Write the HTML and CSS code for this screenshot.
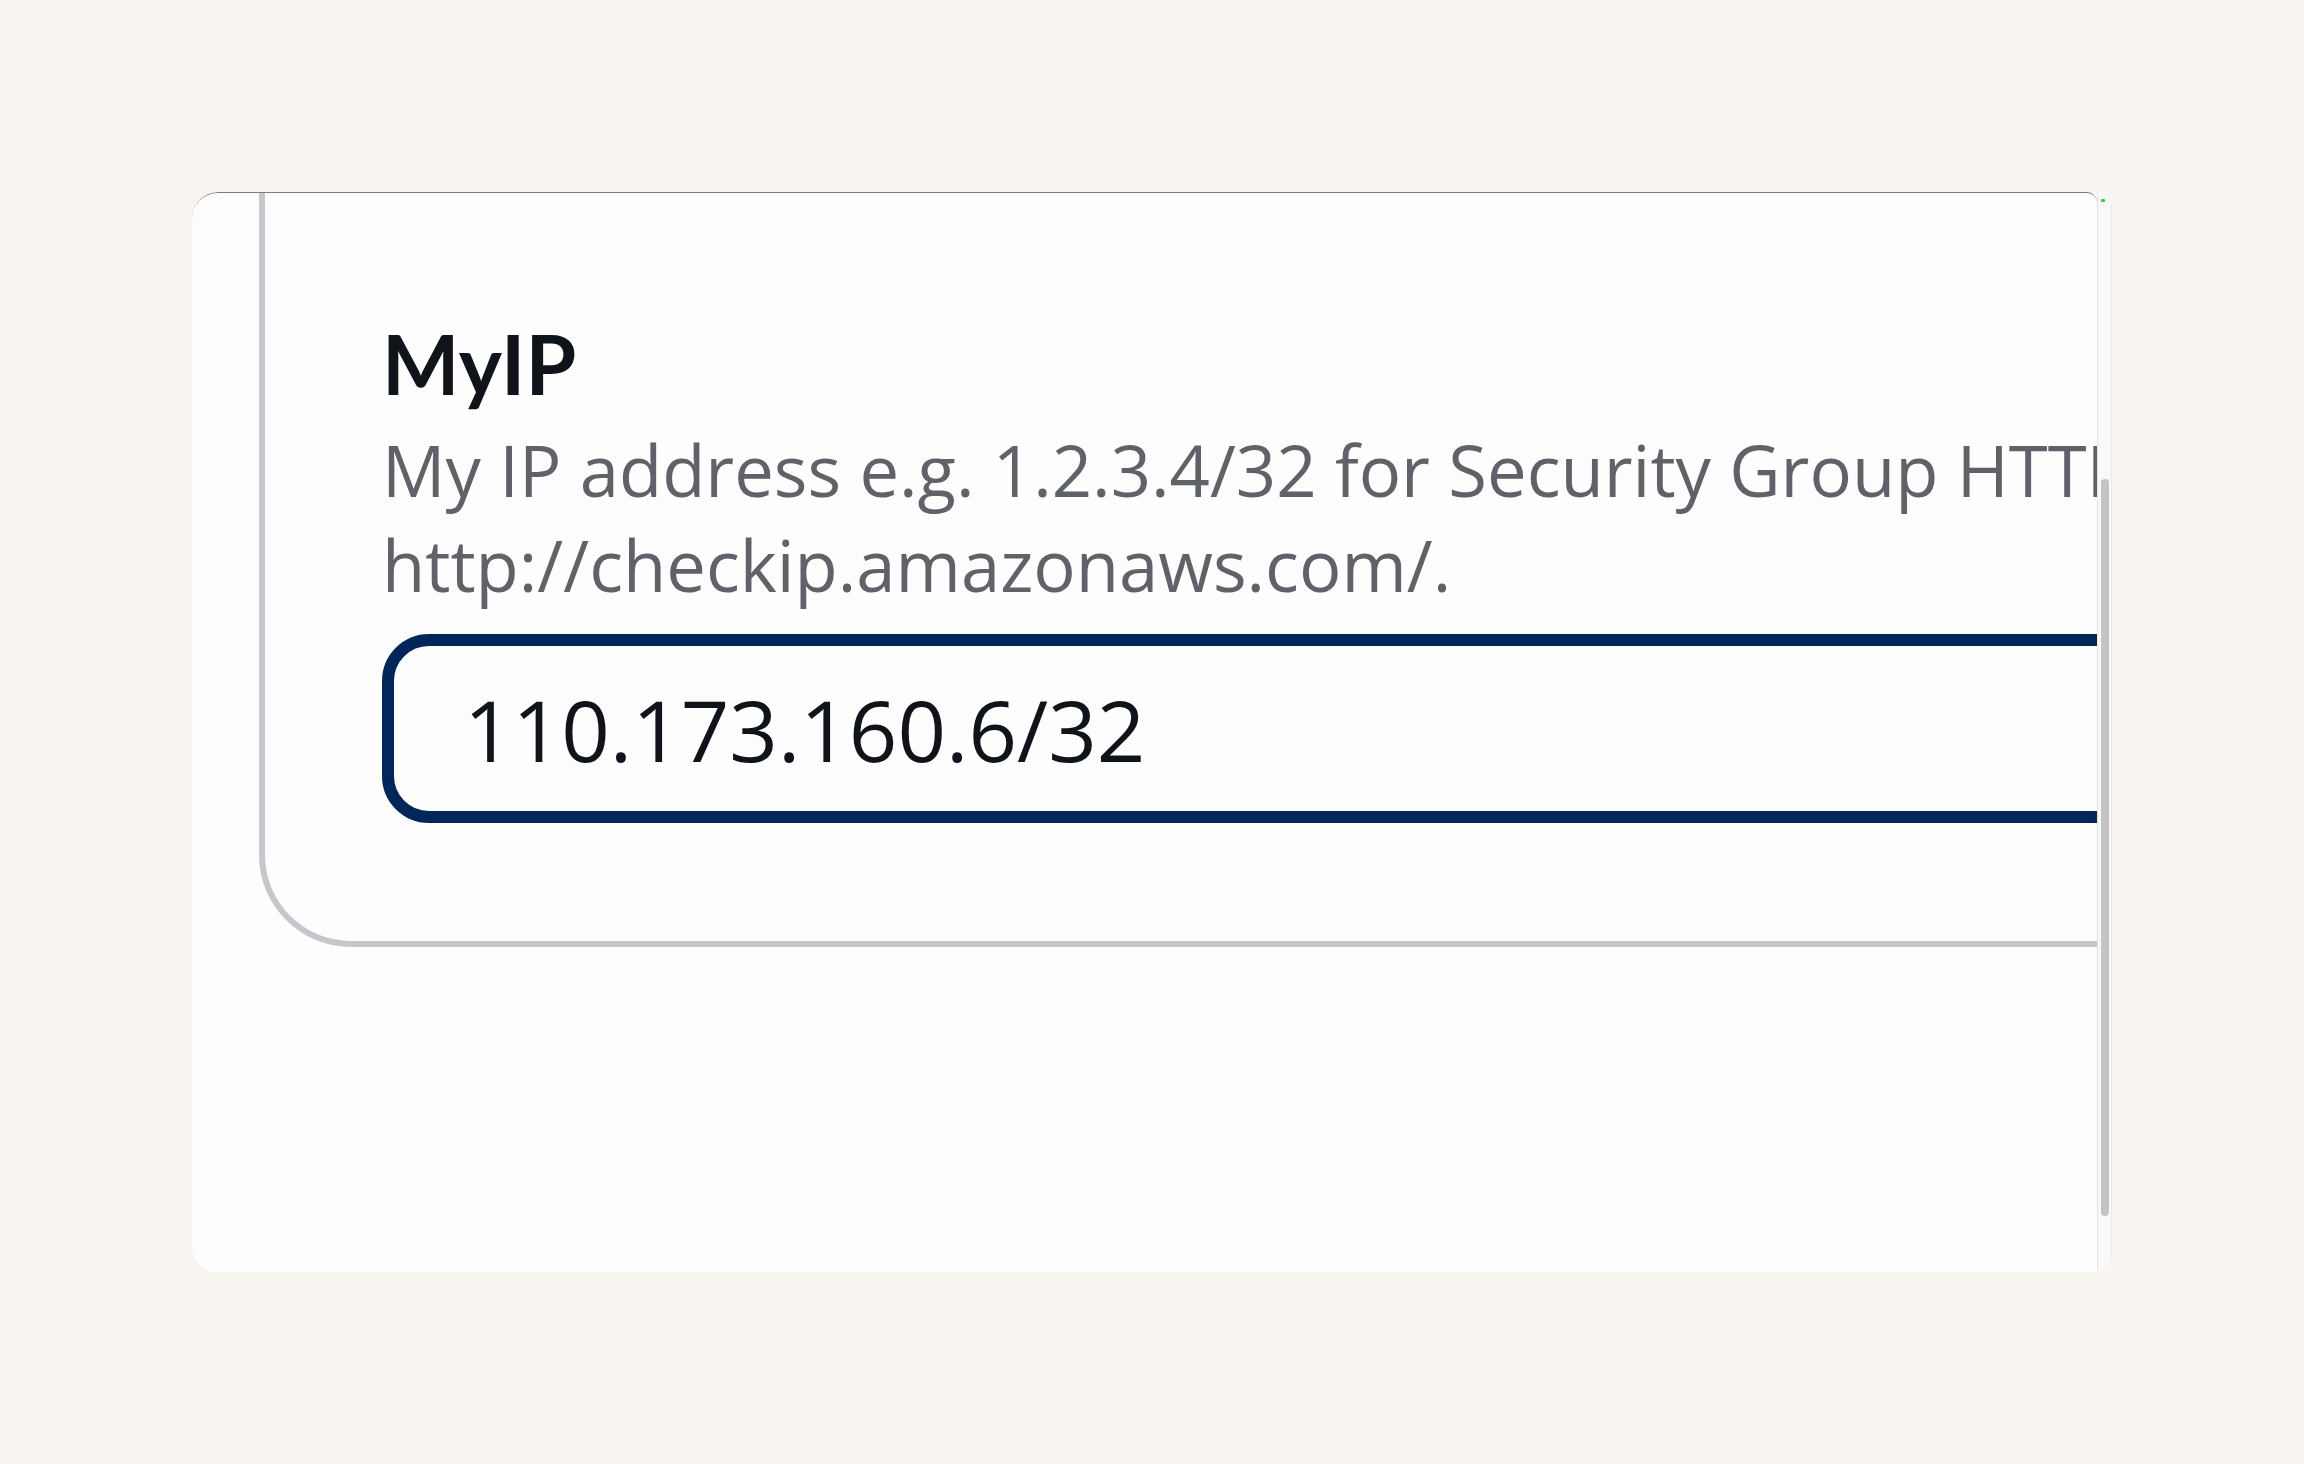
FILE: index.html
```html
<!DOCTYPE html>
<html lang="en">
<head>
<meta charset="utf-8">
<title>MyIP parameter</title>
<link rel="stylesheet" href="styles.css">
</head>
<body>
  <div class="stage">
    <div class="window">
      <div class="viewport">
        <div class="panel">
          <div class="field">
            <div class="label">MyIP</div>
            <div class="desc">My IP address e.g. 1.2.3.4/32 for Security Group HTTP access. Get it from<br>http://checkip.amazonaws.com/.</div>
            <div class="input">110.173.160.6/32</div>
          </div>
        </div>
      </div>
      <div class="scrollbar">
        <span class="mark"></span>
        <div class="thumb"></div>
      </div>
    </div>
  </div>
</body>
</html>
```
FILE: styles.css
```css
html, body {
  margin: 0;
  padding: 0;
}

body {
  background: #f8f5f1;
  font-family: "Open Sans", "Noto Sans", sans-serif;
}

.stage {
  padding: 192px;
}

.window {
  width: 1920px;
  height: 1080px;
  display: flex;
  border-radius: 26px 16px 16px 26px;
  overflow: hidden;
  background: #fdfdfd;
}

.viewport {
  flex: 1;
  min-width: 0;
  overflow: hidden;
  background: #fdfdfd;
  border-top: 1px solid #7d7d7d;
  border-radius: 26px 10px 10px 26px;
  padding-left: 67px;
}

.panel {
  width: 2400px;
  box-sizing: border-box;
  border-left: 6px solid #c6c6cd;
  border-bottom: 6px solid #c6c6cd;
  border-bottom-left-radius: 92px;
  padding: 110px 0 118px 117px;
}

.label {
  font-family: Lato, "Open Sans", sans-serif;
  font-weight: 700;
  font-size: 82px;
  line-height: 120px;
  color: #0f131a;
}

.desc {
  font-size: 70.6px;
  line-height: 95px;
  color: #5f6269;
  white-space: nowrap;
}

.input {
  margin-top: 21px;
  height: 189px;
  box-sizing: border-box;
  border: 12px solid #00265a;
  border-radius: 47px;
  padding-left: 70px;
  display: flex;
  align-items: center;
  font-size: 85px;
  color: #0f131a;
  white-space: nowrap;
}

.scrollbar {
  position: relative;
  width: 15px;
  box-sizing: border-box;
  background: #f8f8f8;
  border-left: 1px solid #e2e2e2;
  border-right: 1px solid #e9e9e9;
  padding: 287px 0 0 3px;
}

.thumb {
  width: 8px;
  height: 737px;
  border-radius: 4px;
  background: #c4c4c4;
}

.mark {
  position: absolute;
  top: 7px;
  left: 3px;
  width: 4px;
  height: 3px;
  background: #35c64a;
  border-radius: 1px;
}
```
